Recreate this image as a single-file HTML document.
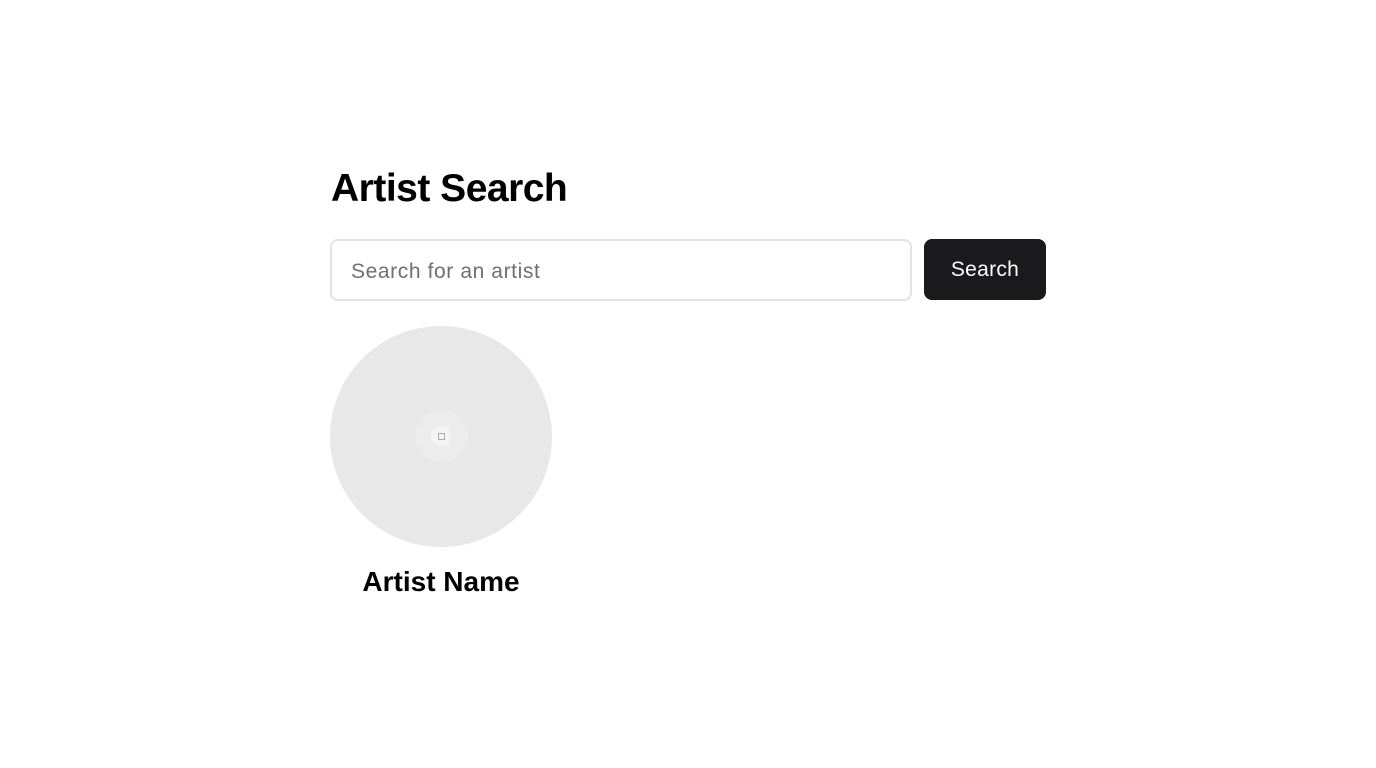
<!DOCTYPE html>
<html><head><style>
body{margin:0;background:#fff;font-family:"Liberation Sans",sans-serif;}
h1{position:absolute;left:331px;top:167px;margin:0;font-size:39px;font-weight:bold;color:#000;letter-spacing:-0.5px;line-height:44px}
.inp{position:absolute;left:330px;top:239px;height:58px;border:2px solid #e3e3e5;border-radius:8px;box-sizing:content-box;width:578px}
.inp span{position:absolute;left:19px;top:19px;font-size:21px;color:#6f6f74;letter-spacing:0.6px}
.btn{position:absolute;left:924px;top:239px;width:122px;height:61px;background:#1a1a1c;border-radius:8px;color:#fff;font-size:21px;text-align:center;line-height:62px;letter-spacing:0.3px}
.circ{position:absolute;left:330px;top:326px;width:222px;height:221px;border-radius:50%;background:#e8e8e8}
.inner{position:absolute;left:416px;top:410px;width:52px;height:52px;border-radius:50%;background:#ececec}
.dot{position:absolute;left:431px;top:426px;width:20px;height:20px;border-radius:50%;background:#f4f4f4}
.sq{position:absolute;left:438px;top:433px;width:5px;height:5px;border:1px solid #aaa}
.name{position:absolute;left:330px;width:222px;top:566px;text-align:center;font-size:28px;font-weight:bold;color:#000}
</style></head><body>
<h1>Artist Search</h1>
<div class="inp"><span>Search for an artist</span></div>
<div class="btn">Search</div>
<div class="circ"></div><div class="inner"></div><div class="dot"></div><div class="sq"></div>
<div class="name">Artist Name</div>
</body></html>
